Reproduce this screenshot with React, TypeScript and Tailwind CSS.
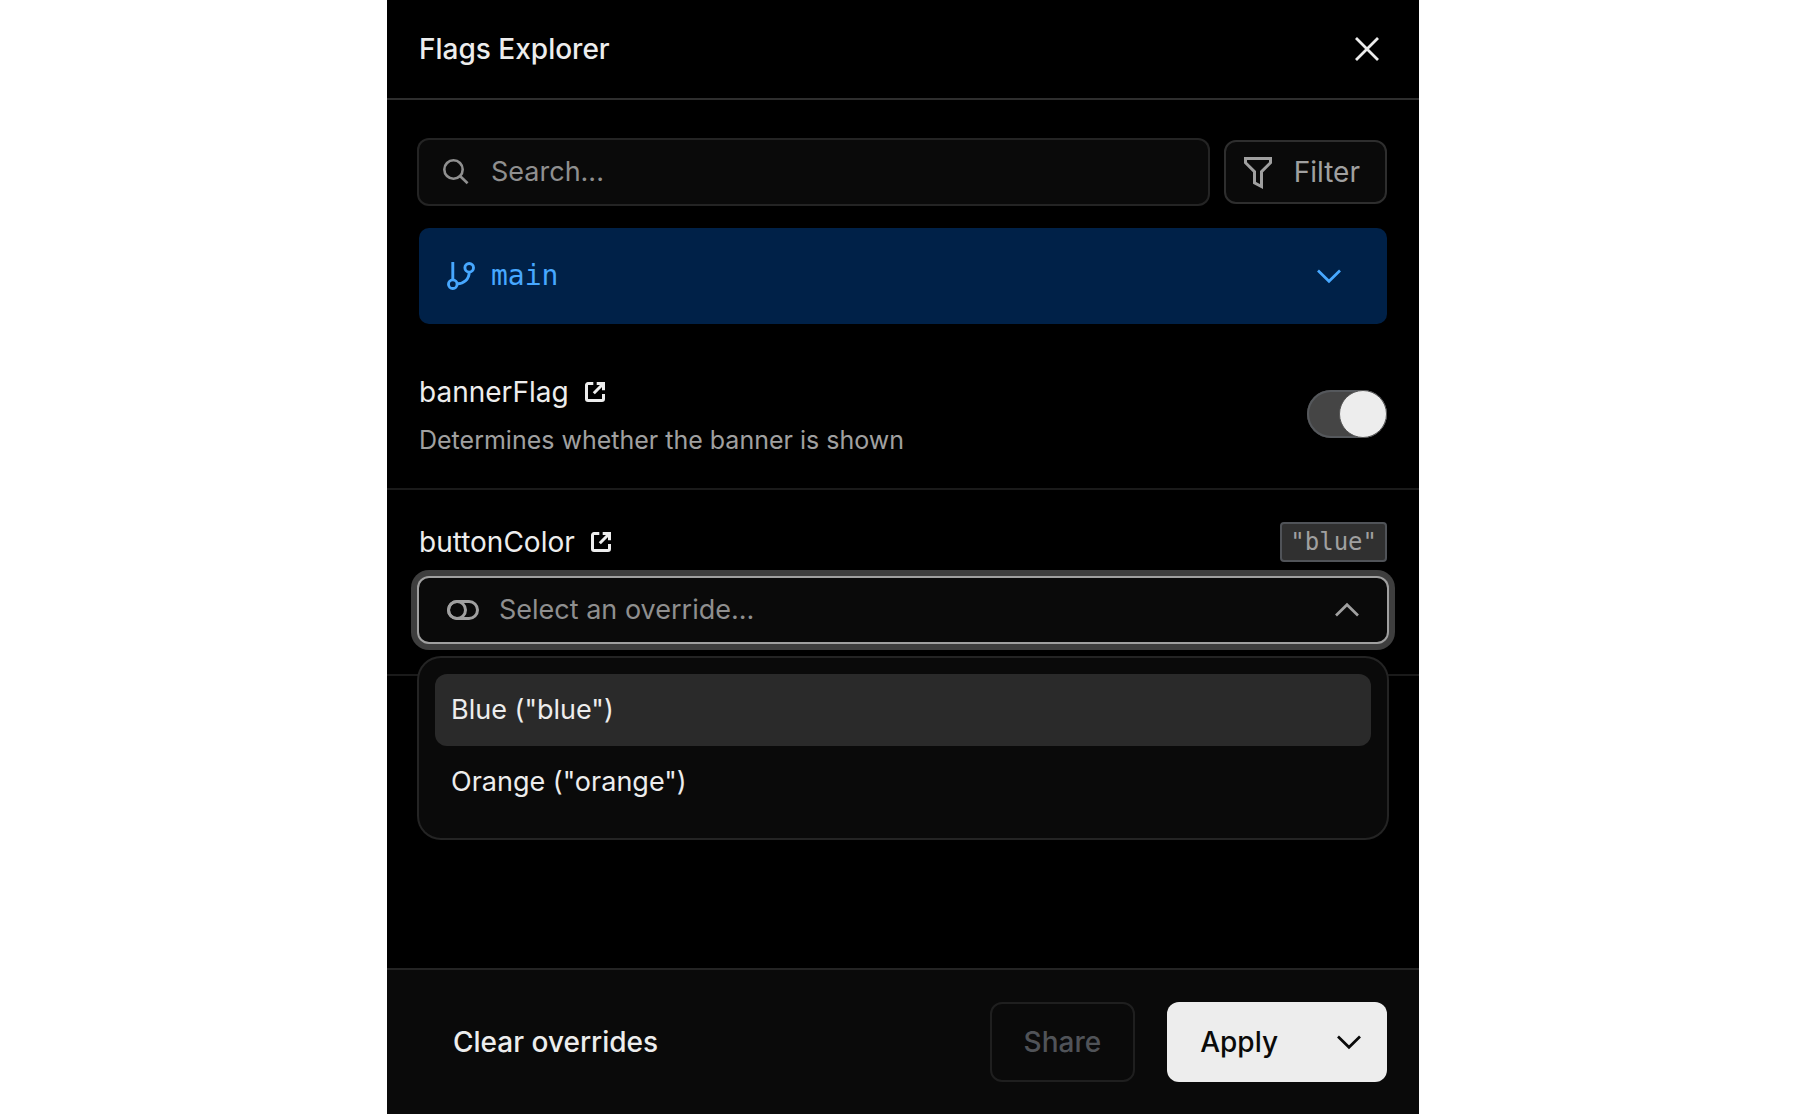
import { useState } from 'react';
import type { ReactNode } from 'react';

const overrides = [
  { label: 'Blue', value: '"blue"' },
  { label: 'Orange', value: '"orange"' },
];

function Chevron({ up = false }: { up?: boolean }) {
  return (
    <svg
      className="size-7 shrink-0"
      viewBox="0 0 28 28"
      fill="none"
      stroke="currentColor"
      strokeWidth="2.7"
      aria-hidden="true"
    >
      <path d={up ? 'M3 19.5 14 8.7 25 19.5' : 'M3 8.5 14 19.3 25 8.5'} />
    </svg>
  );
}

function ExternalIcon() {
  return (
    <svg
      className="size-5"
      viewBox="0 0 20 20"
      fill="none"
      stroke="currentColor"
      strokeWidth="3"
      aria-hidden="true"
    >
      <path d="M8.3 1.5H3A1.5 1.5 0 0 0 1.5 3v14A1.5 1.5 0 0 0 3 18.5h14a1.5 1.5 0 0 0 1.5-1.5v-5" />
      <path d="M11.7 1.5h6.8v6.8M18 2l-9.2 9.2" />
    </svg>
  );
}

function FlagName({ children }: { children: ReactNode }) {
  return (
    <a href="#" className="flex h-10 items-center gap-4 text-[28px] text-[#ededed]">
      {children}
      <ExternalIcon />
    </a>
  );
}

export default function App() {
  const [enabled, setEnabled] = useState(true);
  const [active, setActive] = useState(0);

  return (
    <div className="min-h-screen bg-white font-['Inter',sans-serif] leading-8">
      <main className="mx-auto flex min-h-screen max-w-[1032px] flex-col bg-black text-[#ededed]">
        <header className="flex items-center justify-between border-b-2 border-[#2e2e2e] px-8 py-[29px]">
          <h1 className="text-[28px] leading-10 font-medium">Flags Explorer</h1>
          <button type="button" aria-label="Close" className="grid size-10 place-items-center">
            <svg className="size-7" viewBox="0 0 28 28" fill="none" stroke="currentColor" strokeWidth="2.8" aria-hidden="true">
              <path d="M3 3 25 25M25 3 3 25" />
            </svg>
          </button>
        </header>

        <div className="flex flex-1 flex-col">
          <div className="space-y-6 px-8 pt-10 pb-4">
            <div className="flex gap-4">
              <label className="flex h-16 flex-1 items-center gap-5 rounded-[10px] bg-[#0a0a0a] px-6 text-[#8f8f8f] ring-2 ring-[#242424]">
                <svg className="size-7 shrink-0" viewBox="0 0 28 28" fill="none" stroke="currentColor" strokeWidth="2.6" aria-hidden="true">
                  <circle cx="10.5" cy="11.5" r="9.2" />
                  <path d="m17 18 7.6 7.2" />
                </svg>
                <input
                  type="search"
                  aria-label="Search flags"
                  placeholder="Search..."
                  className="min-w-0 flex-1 bg-transparent text-[27px] outline-none placeholder:text-[#8f8f8f]"
                />
              </label>
              <button
                type="button"
                className="flex h-16 items-center gap-5 rounded-xl border-2 border-[#2e2e2e] bg-[#0a0a0a] pr-[25px] pl-4 text-[28px] text-[#a0a0a0]"
              >
                <svg className="size-8" viewBox="0 0 32 32" overflow="visible" fill="none" stroke="currentColor" strokeWidth="3" aria-hidden="true">
                  <path d="M3.5 2.5h25v4.2l-9 9v14.8l-7-3.6V15.7l-9-9Z" />
                </svg>
                Filter
              </button>
            </div>

            <button
              type="button"
              className="flex h-24 w-full items-center gap-4 rounded-[10px] bg-[#002148] pr-11 pl-7 text-[#47a8ff]"
            >
              <svg className="size-7" viewBox="0 0 28 28" fill="none" stroke="currentColor" strokeWidth="2.9" aria-hidden="true">
                <circle cx="5.8" cy="22.2" r="4.3" />
                <circle cx="22.2" cy="5.8" r="4.3" />
                <path d="M5.8 0v18M22.2 10c0 7-5 11.8-12 11.8" />
              </svg>
              <span className="flex-1 text-left font-['DejaVu_Sans_Mono',monospace] text-[28px]">main</span>
              <Chevron />
            </button>
          </div>

          <section className="flex items-center justify-between border-b-2 border-[#1a1a1a] px-8 py-8">
            <div className="space-y-3">
              <FlagName>bannerFlag</FlagName>
              <p className="text-[25px] text-[#a0a0a0]">Determines whether the banner is shown</p>
            </div>
            <label className="flex h-12 w-20 cursor-pointer items-center rounded-full bg-[#454545] ring-2 ring-[#55585c] ring-inset has-[:checked]:justify-end">
              <input
                type="checkbox"
                role="switch"
                aria-label="bannerFlag"
                className="sr-only"
                checked={enabled}
                onChange={(e) => setEnabled(e.target.checked)}
              />
              <span className="z-10 size-12 rounded-full border border-[#555] bg-[#ededed]" />
            </label>
          </section>

          <section className="space-y-4 border-b-2 border-[#1a1a1a] px-8 py-8">
            <div className="flex items-center justify-between">
              <FlagName>buttonColor</FlagName>
              <code className="flex h-10 items-center rounded border-2 border-[#505358] bg-[#303030] px-2 font-['DejaVu_Sans_Mono',monospace] text-[24px] text-[#a0a0a0]">
                "blue"
              </code>
            </div>
            <div className="relative">
              <label className="flex h-16 items-center gap-5 rounded-[10px] bg-[#0a0a0a] pr-[26px] pl-7 text-[#a0a0a0] shadow-[0_0_0_2px_#a0a0a0,0_0_0_8px_#3e3e3e]">
                <svg className="h-5 w-8 shrink-0" viewBox="0 0 32 20" fill="none" stroke="currentColor" strokeWidth="3" aria-hidden="true">
                  <rect x="1.5" y="1.5" width="29" height="17" rx="8.5" />
                  <circle cx="10" cy="10" r="8.5" />
                </svg>
                <input
                  type="text"
                  role="combobox"
                  aria-label="buttonColor override"
                  aria-expanded="true"
                  aria-controls="override-options"
                  placeholder="Select an override..."
                  className="min-w-0 flex-1 bg-transparent text-[27px] outline-none placeholder:text-[#8f8f8f]"
                />
                <Chevron up />
              </label>
              <ul
                id="override-options"
                role="listbox"
                aria-label="Overrides"
                className="absolute inset-x-0 top-20 rounded-[22px] bg-[#0a0a0a] px-4 pt-4 pb-5 ring-2 ring-[#242424]"
              >
                {overrides.map((option, i) => (
                  <li
                    key={option.value}
                    role="option"
                    aria-selected={i === active}
                    onMouseEnter={() => setActive(i)}
                    className="flex h-[72px] items-center rounded-xl px-4 text-[27px] aria-selected:bg-[#2a2a2a]"
                  >
                    {option.label} ({option.value})
                  </li>
                ))}
              </ul>
            </div>
          </section>
        </div>

        <footer className="flex items-center gap-8 border-t-2 border-[#242424] bg-[#0a0a0a] p-8 text-[28px] font-medium">
          <button type="button" className="mr-auto h-20 px-[34px]">
            Clear overrides
          </button>
          <button type="button" disabled className="h-20 rounded-xl border-2 border-[#1f1f1f] px-8 text-[#505358]">
            Share
          </button>
          <div className="flex h-20 items-center rounded-xl bg-[#ededed] text-[#0a0a0a]">
            <button type="button" className="h-full px-[33px]">
              Apply
            </button>
            <button type="button" aria-label="More apply options" className="grid h-full w-[76px] place-items-center">
              <Chevron />
            </button>
          </div>
        </footer>
      </main>
    </div>
  );
}
